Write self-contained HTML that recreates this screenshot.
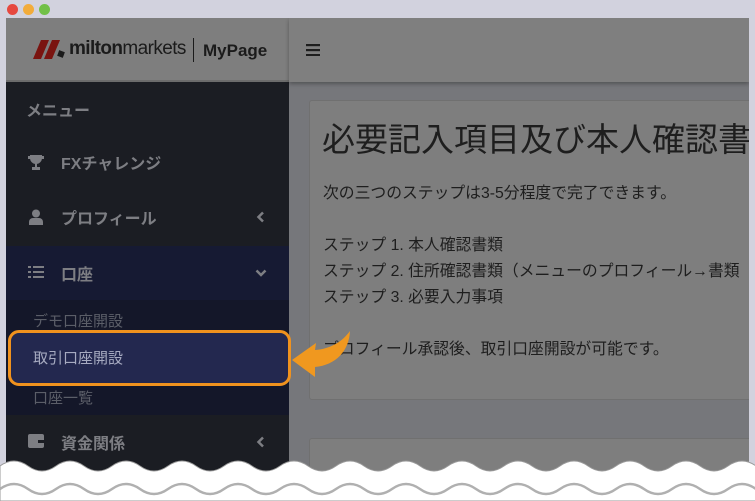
<!DOCTYPE html>
<html><head><meta charset="utf-8"><style>
*{margin:0;padding:0;box-sizing:border-box}
html,body{width:755px;height:501px;overflow:hidden}
body{background:#d2d2de;font-family:"Liberation Sans","Noto Sans CJK JP",sans-serif;position:relative}
.dot{position:absolute;top:4px;width:11px;height:11px;border-radius:50%}
#win{position:absolute;left:6px;top:18px;width:743px;height:483px;background:#76777b;overflow:hidden}
#side{position:absolute;left:0;top:0;width:283px;height:483px;background:#1b1d23}
#logo{position:absolute;left:0;top:0;width:283px;height:64px;background:#7e7e7e;border-bottom:2px solid #6c6c6c}
.item{position:absolute;left:0;width:283px;height:54px;color:#7d7e83;font-size:16px;font-weight:bold;display:flex;align-items:center}
.item .ic{position:absolute;left:22px;top:19px}
.item .t{position:absolute;left:55px}
.chev{position:absolute;left:250px;top:21px}
.sub{position:absolute;left:27px;color:#5b5e68;font-size:15px}
#top{position:absolute;left:283px;top:0;width:460px;height:64px;background:#7f7f7f;box-shadow:0 2px 4px rgba(0,0,0,.3)}
.card{position:absolute;left:303px;width:460px;background:#7e7e7e;border:1px solid #707070;border-radius:3px;color:#1e1e1e;overflow:hidden}
</style></head><body>
<div class="dot" style="left:7px;background:#e6483f"></div>
<div class="dot" style="left:23px;background:#f2ac3b"></div>
<div class="dot" style="left:39px;background:#72c048"></div>
<div id="win">
 <div id="side">
  <div id="logo">
   <svg style="position:absolute;left:26px;top:22px" width="38" height="20"><polygon points="9,0 17,0 9,19 1,19" fill="#7a1410"/><polygon points="20,0 28,0 20,19 12,19" fill="#7a1410"/><rect x="26" y="11" width="6" height="6" fill="#1b1b1b" transform="rotate(20 29 14)"/></svg>
   <div style="position:absolute;left:63px;top:20px;font-size:19px;color:#1b1b1b;letter-spacing:-0.6px"><b>milton</b>markets</div>
   <div style="position:absolute;left:187px;top:20px;width:1px;height:24px;background:#1b1b1b"></div>
   <div style="position:absolute;left:197px;top:23px;font-size:17px;font-weight:bold;color:#1b1b1b">MyPage</div>
  </div>
  <div style="position:absolute;left:20px;top:79px;color:#7d7e83;font-size:16px;font-weight:bold">メニュー</div>
  <div class="item" style="top:117px"><svg class="ic" width="16" height="16"><path d="M2,1h12v3a6,6 0 0 1-12,0z M0,2h3v3h-3z M13,2h3v3h-3z" fill="#7d7e83"/><rect x="7" y="9" width="2" height="4" fill="#7d7e83"/><rect x="4" y="13" width="8" height="3" fill="#7d7e83"/></svg><span class="t">FXチャレンジ</span></div>
  <div class="item" style="top:172px"><svg class="ic" width="16" height="16"><circle cx="8" cy="4.5" r="4" fill="#7d7e83"/><path d="M1,16v-3a4,4 0 0 1 4-4h6a4,4 0 0 1 4,4v3z" fill="#7d7e83"/></svg><span class="t">プロフィール</span><svg class="chev" width="10" height="12"><path d="M7,1.5L2.5,6L7,10.5" stroke="#7d7e83" stroke-width="2.5" fill="none"/></svg></div>
  <div class="item" style="top:228px;background:#161a33"><svg class="ic" width="16" height="14"><g fill="#7d7e83"><rect x="0" y="1" width="3" height="2"/><rect x="5" y="1" width="11" height="2"/><rect x="0" y="6" width="3" height="2"/><rect x="5" y="6" width="11" height="2"/><rect x="0" y="11" width="3" height="2"/><rect x="5" y="11" width="11" height="2"/></g></svg><span class="t">口座</span><svg class="chev" style="top:23px;left:249px" width="12" height="8"><path d="M1.5,1.5l4.5,4.5L10.5,1.5" stroke="#7d7e83" stroke-width="2.5" fill="none"/></svg></div>
  <div style="position:absolute;left:0;top:282px;width:283px;height:115px;background:#141729"></div>
  <div class="sub" style="top:292px">デモ口座開設</div>
  <div class="sub" style="top:369px">口座一覧</div>
  <div class="item" style="top:397px"><svg class="ic" width="16" height="14"><rect x="0" y="0" width="16" height="14" rx="2" fill="#7d7e83"/><rect x="10" y="6" width="6" height="3" fill="#1b1d23"/></svg><span class="t">資金関係</span><svg class="chev" width="10" height="12"><path d="M7,1.5L2.5,6L7,10.5" stroke="#7d7e83" stroke-width="2.5" fill="none"/></svg></div>
 </div>
 <div style="position:absolute;left:2px;top:312px;width:283px;height:56px;background:#23284f;border:3px solid #f0921e;border-radius:11px"></div>
 <div style="position:absolute;left:27px;top:329px;color:#a6aac0;font-size:15px">取引口座開設</div>
 <div id="top"><svg style="position:absolute;left:17px;top:26px" width="14" height="12"><g fill="#1e1e1e"><rect y="0" width="14" height="2.2"/><rect y="5" width="14" height="2.2"/><rect y="10" width="14" height="2.2"/></g></svg></div>
 <div class="card" style="top:82px;height:300px">
  <div style="position:absolute;left:12px;top:12px;font-size:33px;white-space:nowrap">必要記入項目及び本人確認書類</div>
  <div style="position:absolute;left:13px;top:80px;font-size:15.8px;line-height:26px;white-space:nowrap">次の三つのステップは3-5分程度で完了できます。<br><br>ステップ 1. 本人確認書類<br>ステップ 2. 住所確認書類（メニューのプロフィール→書類<br>ステップ 3. 必要入力事項<br><br>プロフィール承認後、取引口座開設が可能です。</div>
 </div>
 <div class="card" style="top:420px;height:63px"></div>
</div>
<svg style="position:absolute;left:0;top:0" width="755" height="501"><path d="M292,360 L316,343 L315,350 C330,349 342,342 350,331 C349,351 336,365 315,367 L315,377 Z" fill="#f0981f"/></svg>
<svg style="position:absolute;left:0;top:452px" width="755" height="49">
<path d="M0,14 Q14,4 28,14 T56,14 T84,14 T112,14 T140,14 T168,14 T196,14 T224,14 T252,14 T280,14 T308,14 T336,14 T364,14 T392,14 T420,14 T448,14 T476,14 T504,14 T532,14 T560,14 T588,14 T616,14 T644,14 T672,14 T700,14 T728,14 T756,14 T784,14 V49 H0Z" fill="#fff" stroke="#9a9a9a" stroke-width="1"/>
<path d="M0,37 Q14,27 28,37 T56,37 T84,37 T112,37 T140,37 T168,37 T196,37 T224,37 T252,37 T280,37 T308,37 T336,37 T364,37 T392,37 T420,37 T448,37 T476,37 T504,37 T532,37 T560,37 T588,37 T616,37 T644,37 T672,37 T700,37 T728,37 T756,37 T784,37" fill="none" stroke="#b0b0b0" stroke-width="2.5"/>
</svg>
</body></html>
